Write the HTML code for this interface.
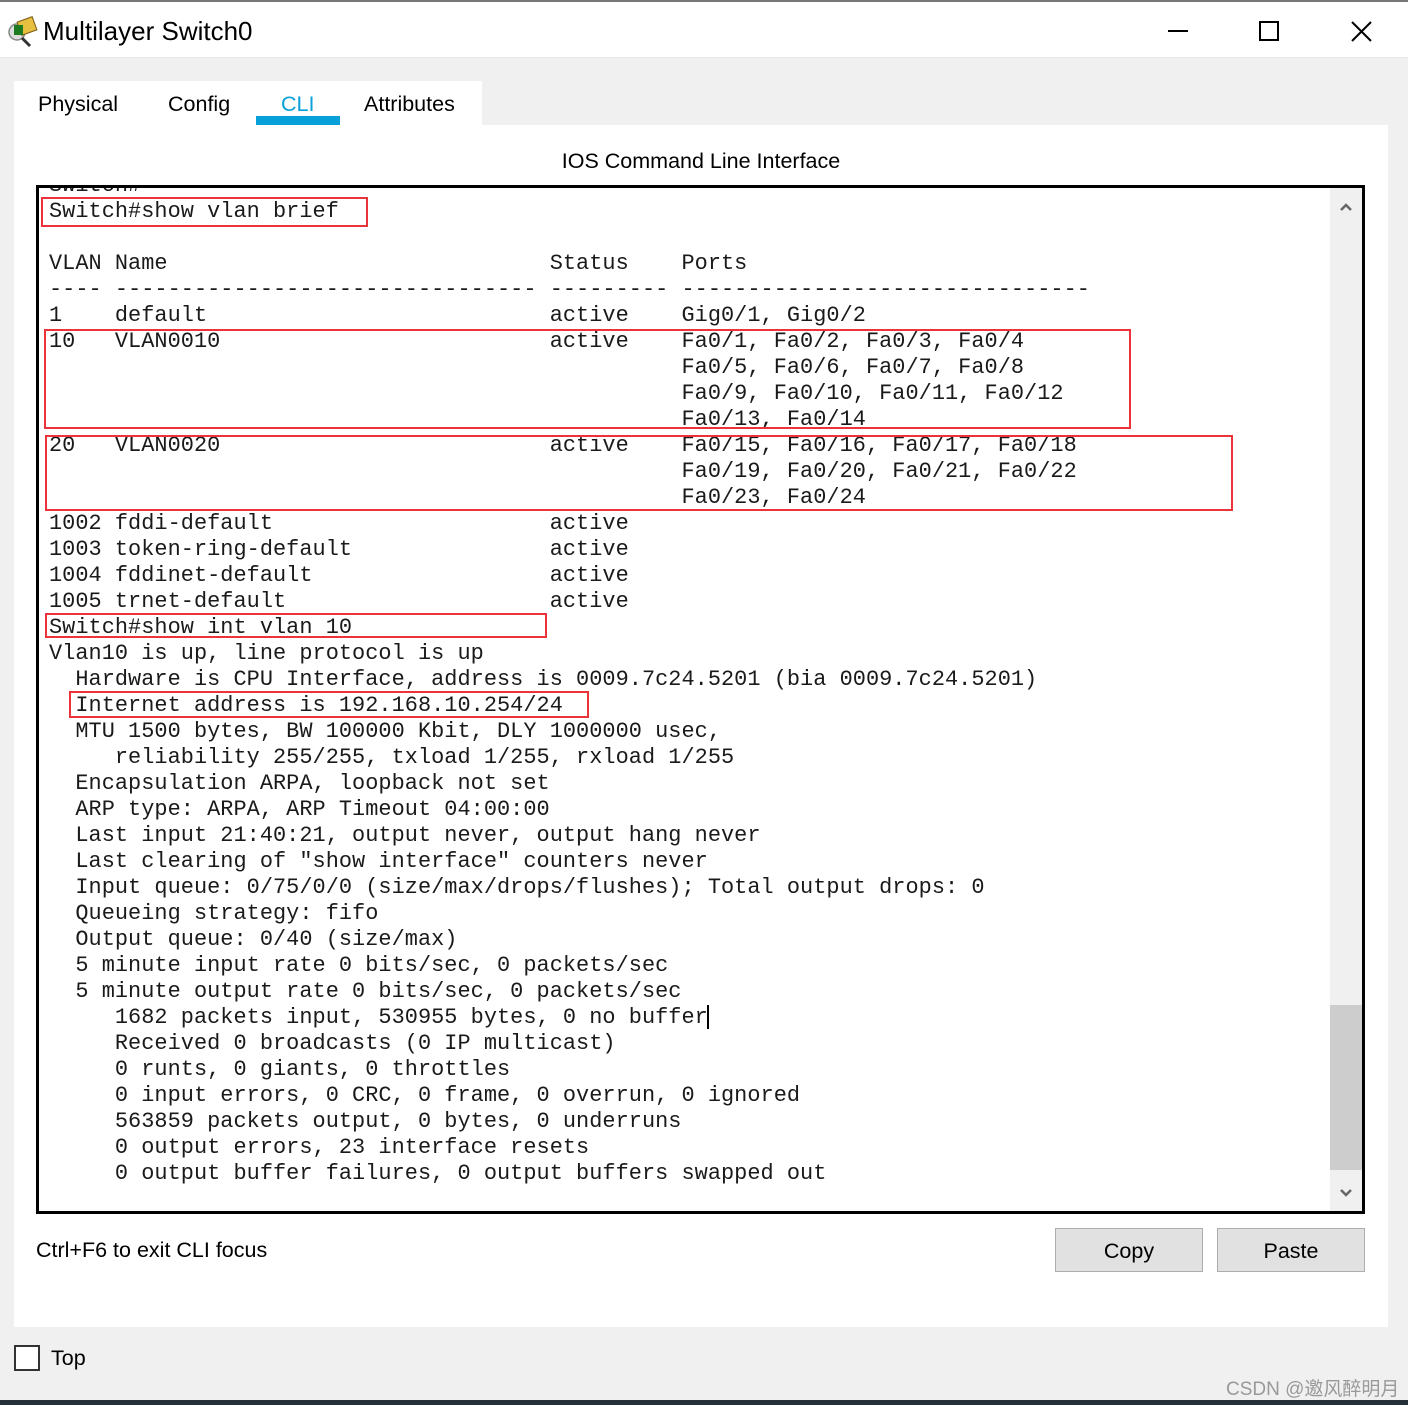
<!DOCTYPE html>
<html><head><meta charset="utf-8">
<style>
*{margin:0;padding:0;box-sizing:border-box}
body{width:1408px;height:1405px;background:#f0f0f0;position:relative;overflow:hidden;font-family:"Liberation Sans",Arial,sans-serif;color:#000}
.abs{position:absolute}
#title{left:0;top:0;width:1408px;height:58px;background:#fff;border-top:2px solid #777;border-bottom:1px solid #e8e8e8}
#tabs{left:14px;top:81px;width:468px;height:44px;background:#fff}
.tab{position:absolute;top:11px;font-size:21.5px}
#panel{left:14px;top:125px;width:1374px;height:1202px;background:#fff}
#term{left:36px;top:185px;width:1329px;height:1029px;border:3px solid #000;background:#fff;overflow:hidden}
pre{position:absolute;left:10px;top:-15px;font-family:"Liberation Mono","Courier New",monospace;font-size:21.9px;letter-spacing:0.04px;line-height:26px;color:#1a1a1a}
.rb{position:absolute;border:2px solid #e8343a}
.btn{position:absolute;top:1228px;width:148px;height:44px;background:#e1e1e1;border:1px solid #adadad;font-size:21.5px;text-align:center;line-height:44px}
</style></head><body>
<div id="title" class="abs">
 <svg class="abs" style="left:6px;top:14px" width="32" height="32" viewBox="0 0 32 32">
  <circle cx="11" cy="16" r="8" fill="#ddd" stroke="#888" stroke-width="1.5"/>
  <line x1="16" y1="22" x2="24" y2="30" stroke="#333" stroke-width="3"/>
  <rect x="13" y="3" width="16" height="14" fill="#e8c040" stroke="#7a5a10" transform="rotate(-20 21 10)"/>
  <rect x="8" y="9" width="9" height="10" fill="#1c7a20"/>
 </svg>
 <div class="abs" style="left:43px;top:14px;font-size:26px">Multilayer Switch0</div>
 <div class="abs" style="left:1168px;top:28px;width:20px;height:2px;background:#000"></div>
 <div class="abs" style="left:1259px;top:19px;width:20px;height:20px;border:2px solid #000"></div>
 <svg class="abs" style="left:1351px;top:19px" width="21" height="21"><path d="M1 1L20 20M20 1L1 20" stroke="#000" stroke-width="2"/></svg>
</div>
<div id="tabs" class="abs">
 <div class="tab" style="left:24px">Physical</div>
 <div class="tab" style="left:154px">Config</div>
 <div class="tab" style="left:267px;color:#0aa0d8">CLI</div>
 <div class="abs" style="left:242px;top:35px;width:84px;height:9px;background:#08a0d8"></div>
 <div class="tab" style="left:350px">Attributes</div>
</div>
<div id="panel" class="abs"></div>
<div class="abs" style="left:0;width:1408px;top:149px;text-align:center;font-size:21.5px"><span style="position:relative;left:-3px">IOS Command Line Interface</span></div>
<div id="term" class="abs">
<pre>Switch#
Switch#show vlan brief

VLAN Name                             Status    Ports
---- -------------------------------- --------- -------------------------------
1    default                          active    Gig0/1, Gig0/2
10   VLAN0010                         active    Fa0/1, Fa0/2, Fa0/3, Fa0/4
                                                Fa0/5, Fa0/6, Fa0/7, Fa0/8
                                                Fa0/9, Fa0/10, Fa0/11, Fa0/12
                                                Fa0/13, Fa0/14
20   VLAN0020                         active    Fa0/15, Fa0/16, Fa0/17, Fa0/18
                                                Fa0/19, Fa0/20, Fa0/21, Fa0/22
                                                Fa0/23, Fa0/24
1002 fddi-default                     active
1003 token-ring-default               active
1004 fddinet-default                  active
1005 trnet-default                    active
Switch#show int vlan 10
Vlan10 is up, line protocol is up
  Hardware is CPU Interface, address is 0009.7c24.5201 (bia 0009.7c24.5201)
  Internet address is 192.168.10.254/24
  MTU 1500 bytes, BW 100000 Kbit, DLY 1000000 usec,
     reliability 255/255, txload 1/255, rxload 1/255
  Encapsulation ARPA, loopback not set
  ARP type: ARPA, ARP Timeout 04:00:00
  Last input 21:40:21, output never, output hang never
  Last clearing of "show interface" counters never
  Input queue: 0/75/0/0 (size/max/drops/flushes); Total output drops: 0
  Queueing strategy: fifo
  Output queue: 0/40 (size/max)
  5 minute input rate 0 bits/sec, 0 packets/sec
  5 minute output rate 0 bits/sec, 0 packets/sec
     1682 packets input, 530955 bytes, 0 no buffer
     Received 0 broadcasts (0 IP multicast)
     0 runts, 0 giants, 0 throttles
     0 input errors, 0 CRC, 0 frame, 0 overrun, 0 ignored
     563859 packets output, 0 bytes, 0 underruns
     0 output errors, 23 interface resets
     0 output buffer failures, 0 output buffers swapped out</pre>
 <div class="abs" style="left:668px;top:817px;width:2px;height:24px;background:#000"></div>
 <div class="abs" style="left:1291px;top:0;width:32px;height:1023px;background:#f0f0f0"></div>
 <div class="abs" style="left:1291px;top:817px;width:32px;height:165px;background:#cdcdcd"></div>
 <svg class="abs" style="left:1300px;top:14px" width="14" height="10"><path d="M2 8L7 3L12 8" stroke="#666" stroke-width="2.5" fill="none"/></svg>
 <svg class="abs" style="left:1300px;top:1000px" width="14" height="10"><path d="M2 2L7 7L12 2" stroke="#666" stroke-width="2.5" fill="none"/></svg>
</div>
<div class="rb" style="left:41px;top:197px;width:327px;height:30px"></div>
<div class="rb" style="left:44px;top:329px;width:1087px;height:100px"></div>
<div class="rb" style="left:45px;top:435px;width:1188px;height:76px"></div>
<div class="rb" style="left:45px;top:613px;width:502px;height:25px"></div>
<div class="rb" style="left:69px;top:691px;width:520px;height:27px"></div>
<div class="abs" style="left:36px;top:1238px;font-size:21.5px">Ctrl+F6 to exit CLI focus</div>
<div class="btn" style="left:1055px">Copy</div>
<div class="btn" style="left:1217px">Paste</div>
<div class="abs" style="left:14px;top:1345px;width:26px;height:26px;border:2px solid #333;background:#fff"></div>
<div class="abs" style="left:51px;top:1346px;font-size:21.5px">Top</div>
<div class="abs" style="left:1226px;top:1374px;font-size:19px;color:#999;font-family:'Liberation Sans','Noto Sans CJK SC',sans-serif">CSDN @邀风醉明月</div>
<div class="abs" style="left:0;top:1400px;width:1408px;height:5px;background:#253038"></div>
</body></html>
